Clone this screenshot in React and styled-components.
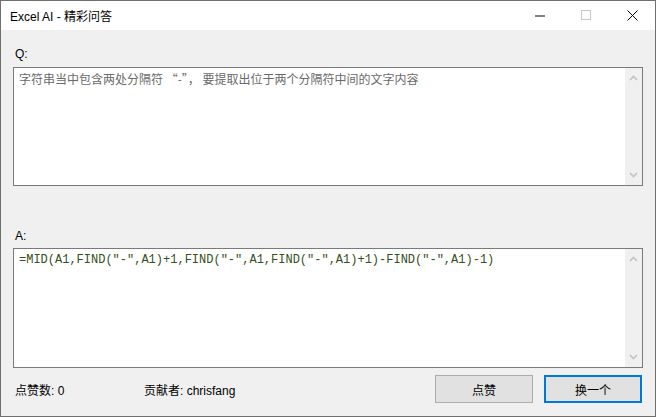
import styled, { createGlobalStyle } from "styled-components";

const Global = createGlobalStyle`
  body {
    margin: 0;
    background: #ffffff;
    font-family: "Segoe UI", "Liberation Sans", "Noto Sans CJK SC", sans-serif;
    font-size: 12px;
  }
`;

const Window = styled.div`
  width: 656px;
  height: 417px;
  box-sizing: border-box;
  border: 1px solid #6f6f6f;
  background: #f0f0f0;
  display: flex;
  flex-direction: column;
`;

const TitleBar = styled.div`
  height: 29px;
  background: #ffffff;
  display: flex;
  align-items: center;
  color: #000;
`;

const Title = styled.div`
  flex: 1;
  padding-left: 9px;
  font-size: 12px;
`;

const CtrlButton = styled.div`
  width: 46px;
  height: 29px;
  display: flex;
  align-items: center;
  justify-content: center;
`;

const Content = styled.div`
  flex: 1;
  padding: 14px 12px 0 12px;
  display: flex;
  flex-direction: column;
`;

const Label = styled.div`
  height: 20px;
  line-height: 20px;
  padding-left: 2px;
  margin-top: ${(p) => p.$top || 0}px;
  margin-bottom: ${(p) => p.$bottom || 0}px;
  color: #000;
`;

const TextBox = styled.div`
  height: ${(p) => p.$h}px;
  box-sizing: border-box;
  border: 1px solid #7a7a7a;
  background: #ffffff;
  display: flex;
`;

const TextContent = styled.div`
  flex: 1;
  padding: 3px 5px;
  line-height: 16px;
  color: ${(p) => p.$color};
  font-family: ${(p) =>
    p.$mono
      ? `"Liberation Mono", "DejaVu Sans Mono", monospace`
      : `"Noto Sans CJK SC", "Liberation Sans", sans-serif`};
  font-size: 12px;
  white-space: pre;
`;

const ScrollTrack = styled.div`
  width: 17px;
  background: #f0f0f0;
  display: flex;
  flex-direction: column;
  justify-content: space-between;
  align-items: center;
  padding: 7px 0;
`;

const Footer = styled.div`
  margin-top: 7px;
  height: 28px;
  display: flex;
  align-items: center;
`;

const Stat = styled.div`
  width: ${(p) => p.$w}px;
  padding-left: 2px;
  color: #000;
`;

const Spacer = styled.div`
  flex: 1;
`;

const Button = styled.div`
  width: 98px;
  height: 28px;
  box-sizing: border-box;
  border: ${(p) => (p.$focus ? "2px solid #0078d7" : "1px solid #adadad")};
  background: #e1e1e1;
  display: flex;
  align-items: center;
  justify-content: center;
  color: #000;
  margin-left: ${(p) => p.$ml || 0}px;
  margin-right: ${(p) => p.$mr || 0}px;
`;

const Chevron = ({ up }) => (
  <svg width="9" height="6" viewBox="0 0 9 6">
    <path
      d={up ? "M1 5 L4.5 1.5 L8 5" : "M1 1 L4.5 4.5 L8 1"}
      fill="none"
      stroke="#c2c2c2"
      strokeWidth="1.6"
    />
  </svg>
);

const Box = ({ h, color, mono, children }) => (
  <TextBox $h={h}>
    <TextContent $color={color} $mono={mono}>
      {children}
    </TextContent>
    <ScrollTrack>
      <Chevron up />
      <Chevron />
    </ScrollTrack>
  </TextBox>
);

export default function App() {
  return (
    <>
      <Global />
      <Window>
        <TitleBar>
          <Title>Excel AI - 精彩问答</Title>
          <CtrlButton>
            <svg width="11" height="2" viewBox="0 0 11 2">
              <rect x="0" y="0.5" width="10" height="1" fill="#000" />
            </svg>
          </CtrlButton>
          <CtrlButton>
            <svg width="11" height="11" viewBox="0 0 11 11">
              <rect x="0.5" y="0.5" width="9" height="9" fill="none" stroke="#c6c6c6" />
            </svg>
          </CtrlButton>
          <CtrlButton>
            <svg width="11" height="11" viewBox="0 0 11 11">
              <path d="M0.5 0.5 L10.5 10.5 M10.5 0.5 L0.5 10.5" stroke="#000" strokeWidth="1" />
            </svg>
          </CtrlButton>
        </TitleBar>
        <Content>
          <Label $bottom={3}>Q:</Label>
          <Box h={119} color="#6a6a6a">
            字符串当中包含两处分隔符 “-”， 要提取出位于两个分隔符中间的文字内容
          </Box>
          <Label $top={40} $bottom={2}>A:</Label>
          <Box h={120} color="#34501a" mono>
            =MID(A1,FIND("-",A1)+1,FIND("-",A1,FIND("-",A1)+1)-FIND("-",A1)-1)
          </Box>
          <Footer>
            <Stat $w={127}>点赞数: 0</Stat>
            <Stat>贡献者: chrisfang</Stat>
            <Spacer />
            <Button>点赞</Button>
            <Button $focus $ml={11} $mr={1}>
              换一个
            </Button>
          </Footer>
        </Content>
      </Window>
    </>
  );
}
